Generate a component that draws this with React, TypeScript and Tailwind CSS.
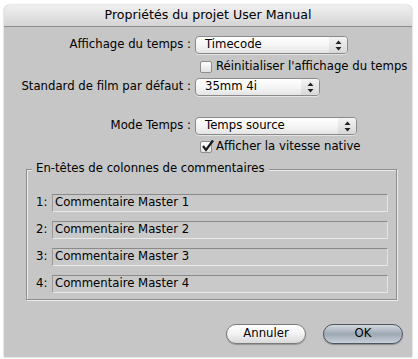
import React from "react";

const font = { fontFamily: '"DejaVu Sans", "Liberation Sans", sans-serif' };

function Arrows() {
  return (
    <svg width="7" height="11" viewBox="0 0 7 11">
      <path d="M3.5 0.5 L6.5 4 L0.5 4 Z" fill="#222" />
      <path d="M3.5 10.5 L6.5 7 L0.5 7 Z" fill="#222" />
    </svg>
  );
}

function Popup({ label, width }: { label: string; width: string }) {
  return (
    <div
      className={`${width} h-[18px] flex items-stretch rounded-[4px] border border-[#8a8a8a] bg-gradient-to-b from-white via-[#f6f6f6] to-[#e4e4e4] shadow-[0_1px_0_rgba(255,255,255,0.5)] overflow-hidden`}
    >
      <div className="flex-1 flex items-center pl-[9px] text-[11.7px] text-black leading-none whitespace-nowrap">{label}</div>
      <div className="w-[18px] flex items-center justify-center bg-gradient-to-b from-[#f4f4f4] to-[#d8d8d8]">
        <Arrows />
      </div>
    </div>
  );
}

function Checkbox({ checked }: { checked?: boolean }) {
  return (
    <div className="relative w-[12px] h-[12px] rounded-[2px] border border-[#8d8d8d] bg-gradient-to-b from-white to-[#e2e2e2] shrink-0">
      {checked && (
        <svg className="absolute -top-[3px] left-[0px]" width="14" height="14" viewBox="0 0 14 14">
          <path d="M2 7 L5 11 L12 1.5" stroke="#1a1a1a" strokeWidth="2.2" fill="none" />
        </svg>
      )}
    </div>
  );
}

function Field({ n }: { n: number }) {
  return (
    <div className="flex items-center h-[18px]">
      <div className="w-[25px] pl-[9px] text-[11.7px] text-black whitespace-nowrap">{n}:</div>
      <div className="w-[336px] h-[18px] flex items-center pl-[2px] text-[11.7px] text-black bg-[#c9c9c9] border-t border-t-[#8a8a8a] border-l border-l-[#9a9a9a] border-b border-b-[#e9e9e9] border-r border-r-[#e2e2e2] whitespace-nowrap">
        Commentaire Master {n}
      </div>
    </div>
  );
}

export default function App() {
  return (
    <div className="w-[418px] h-[359px] bg-white pt-[5px] pl-[4px]" style={font}>
      <div className="w-[408px] h-[352px] rounded-t-[6px] bg-[#c6c6c6] flex flex-col overflow-hidden shadow-[0_0_2px_rgba(0,0,0,0.35)]">
        <div className="h-[22px] shrink-0 flex items-center justify-center bg-gradient-to-b from-[#f0f0f0] to-[#d4d4d4] border-b border-[#8c8c8c] text-[12.6px] text-black whitespace-nowrap">
          Propriétés du projet User Manual
        </div>
        <div className="flex flex-col pt-[9px]">
          <div className="flex items-center h-[18px]">
            <div className="w-[191px] pr-[4px] text-right text-[11.7px] text-black whitespace-nowrap">Affichage du temps :</div>
            <Popup label="Timecode" width="w-[153px]" />
          </div>
          <div className="flex items-center h-[12px] mt-[7px] pl-[196px] gap-[4px]">
            <Checkbox />
            <span className="text-[11.7px] text-black whitespace-nowrap">Réinitialiser l'affichage du temps</span>
          </div>
          <div className="flex items-center h-[18px] mt-[5px]">
            <div className="w-[191px] pr-[4px] text-right text-[11.7px] text-black whitespace-nowrap">Standard de film par défaut :</div>
            <Popup label="35mm 4i" width="w-[125px]" />
          </div>
          <div className="flex items-center h-[18px] mt-[21px]">
            <div className="w-[191px] pr-[4px] text-right text-[11.7px] text-black whitespace-nowrap">Mode Temps :</div>
            <Popup label="Temps source" width="w-[162px]" />
          </div>
          <div className="flex items-center h-[12px] mt-[6px] pl-[196px] gap-[4px]">
            <Checkbox checked />
            <span className="text-[11.7px] text-black whitespace-nowrap">Afficher la vitesse native</span>
          </div>
          <div className="relative ml-[22px] mt-[16px] w-[371px] h-[131px] border border-[#8e8e8e] shadow-[inset_1px_1px_0_#ececec,1px_1px_0_#ececec]">
            <div className="absolute -top-[10px] left-[5px] px-[4px] bg-[#c6c6c6] text-[11.7px] text-black leading-[16px] whitespace-nowrap">
              En-têtes de colonnes de commentaires
            </div>
            <div className="flex flex-col gap-[9px] pt-[24px]">
              <Field n={1} />
              <Field n={2} />
              <Field n={3} />
              <Field n={4} />
            </div>
          </div>
          <div className="flex justify-end gap-[17px] pr-[9px] mt-[24px]">
            <button className="w-[80px] h-[20px] rounded-full border border-[#7a7a7a] bg-gradient-to-b from-white via-[#f2f2f2] to-[#d9d9d9] text-[11.7px] text-black flex items-center justify-center shadow-[0_1px_1px_rgba(0,0,0,0.25)]">
              Annuler
            </button>
            <button className="w-[80px] h-[20px] rounded-full border border-[#4e5660] bg-gradient-to-b from-[#d3d9e0] via-[#9ea8b4] to-[#c8d0da] text-[11.7px] text-black flex items-center justify-center shadow-[0_1px_1px_rgba(0,0,0,0.3)]">
              OK
            </button>
          </div>
        </div>
      </div>
    </div>
  );
}
